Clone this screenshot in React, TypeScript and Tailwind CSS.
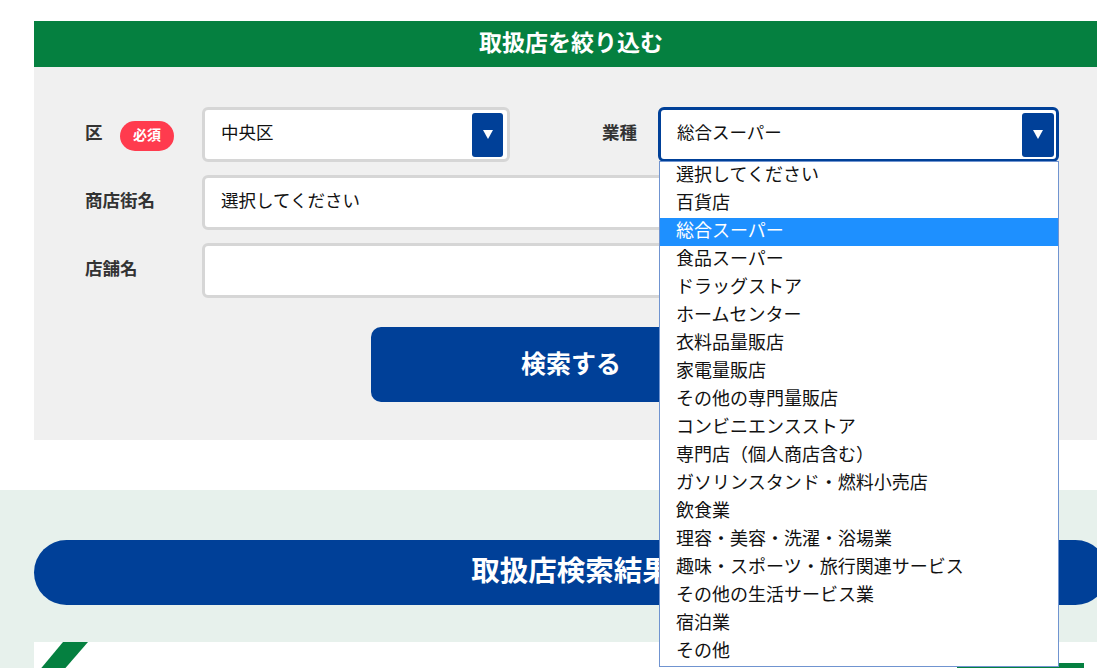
const font = "font-['Noto_Sans_CJK_JP','Noto_Sans',sans-serif]";

const options = [
	"選択してください",
	"百貨店",
	"総合スーパー",
	"食品スーパー",
	"ドラッグストア",
	"ホームセンター",
	"衣料品量販店",
	"家電量販店",
	"その他の専門量販店",
	"コンビニエンスストア",
	"専門店（個人商店含む）",
	"ガソリンスタンド・燃料小売店",
	"飲食業",
	"理容・美容・洗濯・浴場業",
	"趣味・スポーツ・旅行関連サービス",
	"その他の生活サービス業",
	"宿泊業",
	"その他",
];

function Arrow({ className }: { className: string }) {
	return (
		<span className={`flex h-[44px] items-center justify-center rounded-[3px] bg-[#004098] ${className}`}>
			<svg width="10" height="9" viewBox="0 0 10 9">
				<polygon points="0,0 10,0 5,9" fill="#ffffff" />
			</svg>
		</span>
	);
}

function Field({ value, active, className }: { value: string; active?: boolean; className: string }) {
	return (
		<div
			className={`flex h-[55px] items-center justify-between rounded-[6px] border-[3px] bg-white pl-[16px] ${
				active ? "border-[#004098] pr-[2px]" : "border-[#d6d6d6] pr-[4px]"
			} ${className}`}
		>
			<span className="pb-[6px] text-[17.5px] leading-none text-[#111]">{value}</span>
			{active !== undefined && <Arrow className={active ? "w-[32px]" : "w-[31px]"} />}
		</div>
	);
}

function Label({ children, className }: { children: React.ReactNode; className: string }) {
	return <div className={`pb-[4px] text-[17.5px] font-bold text-[#333] ${className}`}>{children}</div>;
}

export default function App() {
	return (
		<div className={`h-[668px] w-[1097px] overflow-hidden bg-white pt-[21px] ${font}`}>
			<section className="ml-[34px] w-[1074px] bg-[#f0f0f0]">
				<h2 className="flex h-[46px] items-center justify-center bg-[#058040] pb-[6px] text-[23px] font-bold text-white">
					取扱店を絞り込む
				</h2>
				<div className="relative h-[373px] pl-[51px] pt-[40px]">
					<div className="flex items-center">
						<Label className="w-[35px]">区</Label>
						<span className="mt-[2px] flex h-[30px] w-[54px] items-center justify-center rounded-full bg-[#ff3b4e] pb-[2px] text-[14px] font-bold text-white">
							必須
						</span>
						<Field value="中央区" active={false} className="ml-[28px] w-[308px]" />
						<Label className="ml-[92px] w-[56px]">業種</Label>
						<Field value="総合スーパー" active className="w-[401px]" />
					</div>
					<div className="mt-[13px] flex items-center">
						<Label className="w-[117px]">商店街名</Label>
						<Field value="選択してください" className="w-[857px]" />
					</div>
					<div className="mt-[13px] flex items-center">
						<Label className="w-[117px]">店舗名</Label>
						<Field value="" className="w-[857px]" />
					</div>
					<button className="mt-[29px] ml-[286px] flex h-[75px] w-[400px] items-center justify-center rounded-[10px] bg-[#004098] pb-[4px] text-[25px] font-bold text-white">
						検索する
					</button>
					<ul className="absolute left-[625px] top-[94px] z-10 w-[400px] border border-[#7094d0] bg-white">
						{options.map((o) => (
							<li
								key={o}
								className={`flex h-[28px] items-center pb-[6px] pl-[16px] text-[18px] ${
									o === "総合スーパー" ? "bg-[#1e90ff] text-white" : "text-[#111]"
								}`}
							>
								{o}
							</li>
						))}
					</ul>
				</div>
			</section>

			<section className="mt-[50px] h-[300px] bg-[#e7f1ec] pt-[50px]">
				<h2 className="ml-[34px] flex h-[65px] w-[1074px] items-center justify-center rounded-full bg-[#004098] pb-[6px] text-[28.5px] font-bold text-white">
					取扱店検索結果
				</h2>
				<div className="relative ml-[34px] mt-[37px] h-[200px] w-[1074px] overflow-hidden bg-white">
					<svg className="absolute left-0 top-0" width="60" height="30" viewBox="0 0 60 30">
						<polygon points="29,0 54,0 28,30 4,30" fill="#058040" />
					</svg>
					<div className="ml-[923px] mt-[21px] h-[20px] w-[127px] bg-[#058040]" />
				</div>
			</section>
		</div>
	);
}
